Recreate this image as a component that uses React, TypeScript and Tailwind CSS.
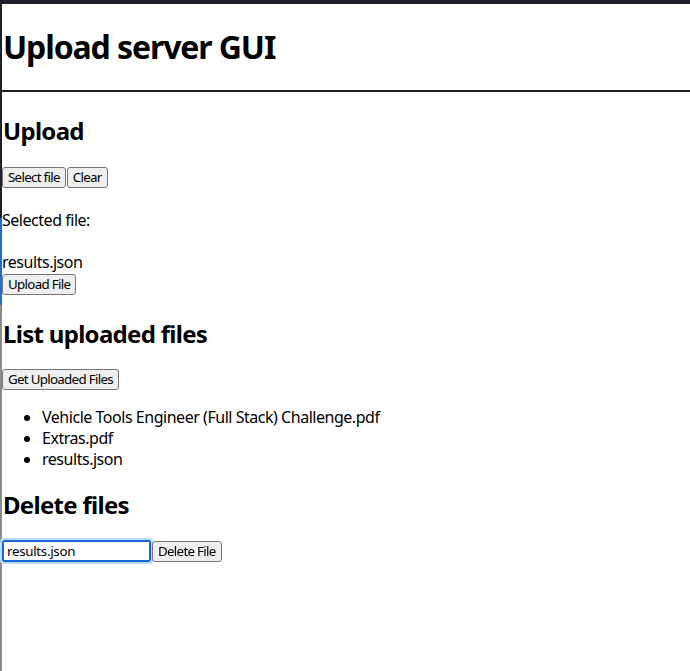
import { useState } from 'react'

const FILES = ['Vehicle Tools Engineer (Full Stack) Challenge.pdf', 'Extras.pdf', 'results.json']

const btn =
  "inline-block h-[21px] px-[5px] text-[13.33px] leading-[19px] tracking-[-0.7px] text-black bg-[#efefef] border border-[#767676] rounded-[3px] align-middle font-['Noto_Sans',sans-serif]"

export default function App() {
  const [name, setName] = useState('results.json')

  return (
    <div className="min-h-[671px] bg-white text-black font-['Noto_Sans',sans-serif] tracking-[-0.47px] flex flex-col">
      {/* window chrome top */}
      <div className="h-[4px] bg-[#202028]" />
      <div className="flex flex-1">
        {/* window chrome left edge */}
        <div className="w-[2px] flex flex-col shrink-0">
          <div className="h-[214px] bg-[#202028]" />
          <div className="h-[87px] bg-[#1a73c8]" />
          <div className="flex-1 bg-[#8a8a8a]" />
        </div>

        <div className="flex-1 min-w-0">
          <header className="h-[88px] border-b-2 border-[#1c1c1c] flex items-center">
            <h1 className="text-[32px] leading-[42px] font-bold pl-[1px] tracking-[-1.1px]">Upload server GUI</h1>
          </header>

          <h2 className="mt-[23px] text-[24px] leading-[32px] font-bold pl-[1px] tracking-[-0.7px]">Upload</h2>

          <div className="mt-[20px] flex">
            <button className={btn}>Select file</button>
            <button className={btn + ' ml-[1px]'}>Clear</button>
          </div>

          <p className="mt-[22px] text-[16px] leading-[21px]">Selected file:</p>
          <p className="mt-[21px] text-[16px] leading-[21px]">results.json</p>
          <div className="mt-[1px] flex">
            <button className={btn}>Upload File</button>
          </div>

          <h2 className="mt-[23px] text-[24px] leading-[32px] font-bold pl-[1px] tracking-[-0.7px]">List uploaded files</h2>

          <div className="mt-[19px] flex">
            <button className={btn}>Get Uploaded Files</button>
          </div>

          <ul className="mt-[17px] list-disc pl-10 text-[16px] leading-[21px]">
            {FILES.map(f => (
              <li key={f}>{f}</li>
            ))}
          </ul>

          <h2 className="mt-[19px] text-[24px] leading-[32px] font-bold pl-[1px] tracking-[-0.7px]">Delete files</h2>

          <div className="mt-[19px] flex items-center">
            <input
              value={name}
              onChange={e => setName(e.target.value)}
              autoFocus
              className="w-[149px] h-[22px] px-[3px] text-[13.33px] tracking-[-0.3px] border-2 border-[#1668d9] rounded-[2px] outline outline-2 outline-[#b9dcfb] text-black font-['Noto_Sans',sans-serif]"
            />
            <button className={btn + ' ml-[1px]'}>Delete File</button>
          </div>
        </div>
      </div>
    </div>
  )
}
